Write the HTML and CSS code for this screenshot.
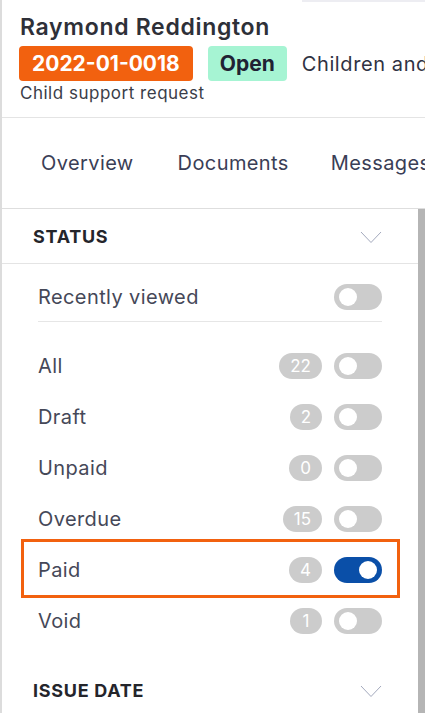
FILE: index.html
```html
<!DOCTYPE html>
<html lang="en">
<head>
  <meta charset="UTF-8" />
  <meta name="viewport" content="width=device-width, initial-scale=1.0"/>
  <title>Raymond Reddington - Case</title>
  <link rel="stylesheet" href="styles.css">
</head>
<body>
  <div class="page">
    <div class="topstrip"></div>

    <header class="case-header">
      <h1>Raymond Reddington</h1>
      <div class="case-tags">
        <span class="tag tag-number">2022-01-0018</span>
        <span class="tag tag-open">Open</span>
        <span class="case-type">Children and families</span>
      </div>
      <div class="case-sub">Child support request</div>
    </header>

    <nav class="tabs">
      <a class="tab">Overview</a>
      <a class="tab">Documents</a>
      <a class="tab">Messages</a>
    </nav>

    <div class="filters">
      <div class="section-head">
        <span>STATUS</span>
        <svg class="chevron" width="22" height="13" viewBox="0 0 22 13">
          <polyline points="1,1 11,11.5 21,1" fill="none" stroke="#a3a9bd" stroke-width="1"/>
        </svg>
      </div>

      <div class="status-list">
        <div class="row recent">
          <span class="label">Recently viewed</span>
          <span class="toggle"><span class="knob"></span></span>
        </div>

        <div class="rows">
          <div class="row">
            <span class="label">All</span>
            <span class="count">22</span>
            <span class="toggle"><span class="knob"></span></span>
          </div>
          <div class="row">
            <span class="label">Draft</span>
            <span class="count">2</span>
            <span class="toggle"><span class="knob"></span></span>
          </div>
          <div class="row">
            <span class="label">Unpaid</span>
            <span class="count">0</span>
            <span class="toggle"><span class="knob"></span></span>
          </div>
          <div class="row">
            <span class="label">Overdue</span>
            <span class="count">15</span>
            <span class="toggle"><span class="knob"></span></span>
          </div>
          <div class="row highlight">
            <span class="label">Paid</span>
            <span class="count">4</span>
            <span class="toggle on"><span class="knob"></span></span>
          </div>
          <div class="row">
            <span class="label">Void</span>
            <span class="count">1</span>
            <span class="toggle"><span class="knob"></span></span>
          </div>
        </div>
      </div>

      <div class="section-head">
        <span>ISSUE DATE</span>
        <svg class="chevron" width="22" height="13" viewBox="0 0 22 13">
          <polyline points="1,1 11,11.5 21,1" fill="none" stroke="#a3a9bd" stroke-width="1"/>
        </svg>
      </div>
    </div>
  </div>
</body>
</html>
```

FILE: styles.css
```css
body {
  margin: 0;
  background-color: #fff;
  font-family: Inter, "Noto Sans", sans-serif;
  color: #2e3038;
}
.page {
  position: relative;
  border-left: 2px solid #dcdcdc;
  min-height: 713px;
  overflow: hidden;
}
.topstrip {
  position: absolute;
  top: 0;
  left: 300px;
  right: 0;
  height: 2px;
  background-color: #ededf2;
}

.case-header {
  padding: 14px 0 13px 17px;
  border-bottom: 1px solid #e4e4e4;
}
h1 {
  margin: 0 0 0 1px;
  font-size: 23px;
  line-height: 27px;
  font-weight: 600;
  letter-spacing: 0.03em;
  color: #2e3038;
}
.case-tags {
  display: flex;
  align-items: center;
  margin-top: 5px;
  white-space: nowrap;
}
.tag {
  font-size: 21px;
  line-height: 25px;
  font-weight: 700;
  padding: 5px 13px;
  border-radius: 4px;
}
.tag-number {
  background-color: #f2610f;
  color: #fff;
}
.tag-open {
  margin-left: 15px;
  padding: 5px 12px;
  background-color: #a6f4d3;
  color: #1f2233;
}
.case-type {
  margin-left: 15px;
  font-size: 20px;
  letter-spacing: 0.03em;
  color: #2f3243;
}
.case-sub {
  margin: 2px 0 0 1px;
  font-size: 17px;
  line-height: 21px;
  letter-spacing: 0.03em;
  color: #3a3d48;
}

.tabs {
  display: flex;
  align-items: center;
  height: 90px;
  padding-left: 17px;
  border-bottom: 1px solid #dedede;
  white-space: nowrap;
}
.tab {
  padding: 0 22px;
  font-size: 20px;
  letter-spacing: 0.02em;
  color: #3a3e56;
}
.tab:last-child {
  padding-left: 20px;
}

.filters {
  border-right: 7px solid #b5b5b5;
}
.section-head {
  display: flex;
  align-items: center;
  justify-content: space-between;
  height: 54px;
  padding: 0 36px 0 31px;
  font-size: 18px;
  font-weight: 700;
  letter-spacing: 0.04em;
  color: #24252b;
}
.section-head:first-child {
  border-bottom: 1px solid #e4e4e4;
}
.chevron {
  margin-top: 2px;
}

.status-list {
  padding: 9px 36px 17px 36px;
}
.row {
  position: relative;
  display: flex;
  align-items: center;
  height: 51px;
}
.row.recent {
  height: 48px;
  border-bottom: 1px solid #e6e6e6;
}
.rows {
  margin-top: 18px;
}
.label {
  flex: 1;
  font-size: 20px;
  letter-spacing: 0.02em;
  color: #454858;
}
.count {
  box-sizing: border-box;
  min-width: 32px;
  height: 26px;
  padding: 0 11px;
  margin-right: 12px;
  border-radius: 13px;
  background-color: #cccccc;
  color: #fff;
  font-size: 17px;
  line-height: 26px;
  text-align: center;
}
.toggle {
  box-sizing: border-box;
  display: flex;
  align-items: center;
  width: 48px;
  height: 26px;
  padding: 0 5px;
  border-radius: 13px;
  background-color: #cccccc;
}
.toggle.on {
  justify-content: flex-end;
  background-color: #0a4fa8;
}
.knob {
  width: 18px;
  height: 18px;
  border-radius: 50%;
  background-color: #fff;
}
.row.highlight::after {
  content: "";
  position: absolute;
  top: -5px;
  bottom: -3px;
  left: -17px;
  right: -18px;
  border: 3px solid #f2610f;
}
```
